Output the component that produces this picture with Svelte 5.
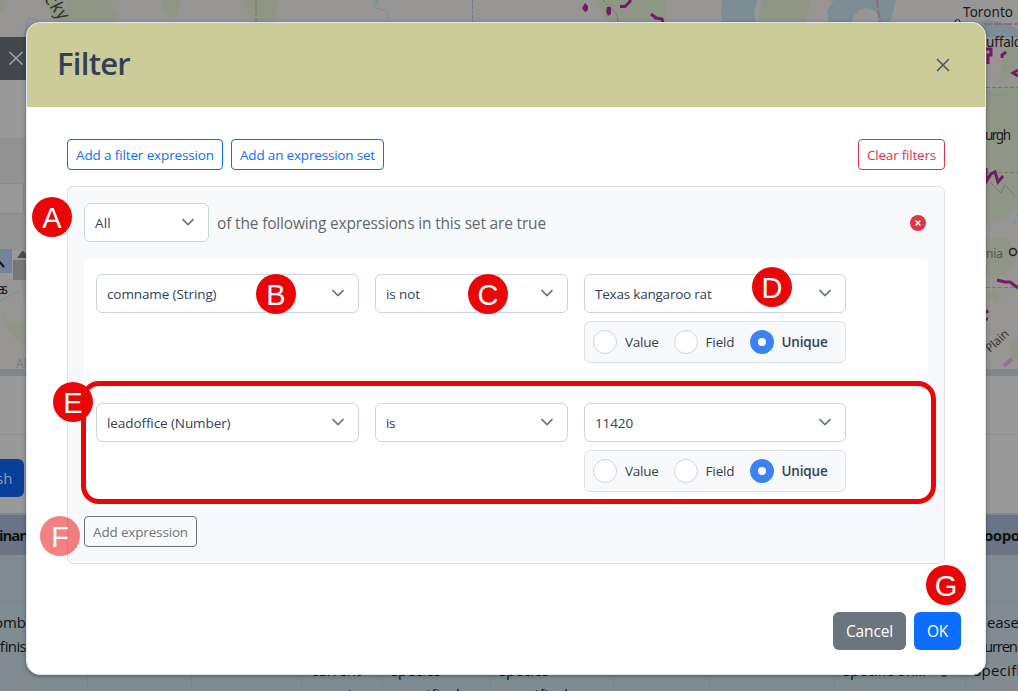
<script>
  const rules = [
    { field: ['comname (String)', 109.5], op: ['is not', 34], value: ['Texas kangaroo rat', 116.5] },
    { field: ['leadoffice (Number)', 123.5], op: ['is', 9], value: ['11420', 38] }
  ];
  const modes = [['Value', 33.5], ['Field', 29], ['Unique', 46]];
  const badges = [
    ['A', 52, 217], ['B', 276, 294], ['C', 488, 294], ['D', 772, 287],
    ['E', 73, 402], ['F', 60, 536], ['G', 946, 585]
  ];

  // Spreads a label's letters so that it takes exactly the given width.
  function fit(node, width) {
    const natural = node.getBoundingClientRect().width;
    node.style.letterSpacing = `${(width - natural) / node.textContent.length}px`;
  }
</script>

{#snippet label(text, width)}
  <span class="label" use:fit={width}>{text}</span>
{/snippet}

{#snippet select(item)}
  <div class="select">
    {@render label(item[0], item[1])}
    <svg width="14" height="14" viewBox="0 0 14 14"><path d="M1.5 4.1 7 9.6l5.5-5.5" /></svg>
  </div>
{/snippet}

<div class="screen">
  <svg class="backdrop" width="1018" height="691" viewBox="0 0 1018 691" aria-hidden="true">
    <rect width="1018" height="369" fill="#979694" />
    <g fill="#8f9685">
      <path d="M42 0h16l6 8 12-5 8 8-7 10-18 1-8-8zM66 0h48l-4 10 10 4-6 9H72l-5-9zM160 0h20l-2 12-4 8-8-6zM243 0h36l-5 23h-22zM598 0h68v23h-56l-8-10zM762 0h50l-8 23h-46zM828 0h36l-6 14h-20zM0 0h4l2 10-6 2z" />
      <path d="M986 92q14-8 32-6v120l-12 10-20 8zM986 238h22l10 22-12 14-20 4zM986 296l8-8 8 8-6 7zM1010 340h8v18h-6zM0 308l8 16 18-4v26l-10-6-8-10zM20 280l6 2v20z" />
      <path d="M1001 45l7-5 10 10v18l-10 10-10 6 4-20z" />
    </g>
    <g fill="#8a939a">
      <path d="M722 0h36l-4 11 2 12h-34l-1-12z" fill="#7c8d95" />
      <path d="M834 0h62l-6 23h-10q-2-14-13-15-12 0-16 15h-22l-2-12z" fill="#7c8d95" />
      <path d="M980 21q15-3 38 8v8h-32z" fill="#7c8d95" />
    </g>
    <path d="M378 0q-9 8 2 9t8 12M374 2q8 4 2-2M28 19h9l-2 18H24zM12 294q10-8 14 8M0 301l11-6M986 90q9 9 19 3M1018 214l-4 10" fill="none" stroke="#759199" />
    <path d="M472.500 0v22" stroke="#777b8b" stroke-dasharray="4 1" />
    <path d="M256 0v22M986 87.500h32M986 172.500h32M986 287.500h32" stroke="#777" stroke-dasharray="4 2" fill="none" />
    <path d="M603 0l6 7q9 5 9 15" stroke="#737684" fill="none" />
    <path d="M877 0l3 23M984 24h34" stroke="#896f7a" stroke-width="2" stroke-dasharray="8 2" />
    <path d="M990 182l11 11 4-8 5 5 5 7" stroke="#777" fill="none" />
    <g fill="none" stroke="#751a67" stroke-width="3">
      <path d="M620 6.500h5l5-5V0M651 14l5 4 6 1 1 4M986 49h5v6h-3v9M1006 52l-4 3v3M1018 70l-5 3 5 3M986 168v14l5-8 4-2 3 10 5-6M997 280l8 2h5l8 6M986 310l2 3M986 319h2" />
    </g>
    <path d="M585 3l3 3v4l-3 2-3-4zM607 7h4v7l-3 2-2-4z" fill="#751a67" />
    <path d="M1004 366l8-7" stroke="#96729a" stroke-width="4" />
    <g class="map-text">
      <text x="963" y="17" textLength="50">Toronto</text>
      <text x="986" y="47" textLength="36">uffalo</text>
      <text x="985" y="140" textLength="26">urgh</text>
      <text x="986" y="258" textLength="17" font-size="12" fill="#555">nia</text>
      <text x="-3" y="294" textLength="11">as</text>
      <text x="16" y="368" font-size="12" fill="#777">Al</text>
      <text transform="translate(990 353) rotate(-43)" font-size="12" textLength="27" fill="#333">Plain</text>
      <text transform="translate(44 0) rotate(52)" font-size="18" textLength="27" font-style="italic" fill="#333">cky</text>
    </g>
    <circle cx="957.500" cy="22" r="2.500" fill="none" stroke="#222" />
    <circle cx="1013" cy="252" r="3.500" fill="none" stroke="#222" stroke-width="1.500" />

    <rect y="37" width="27" height="43" fill="#42474b" />
    <path d="M9.500 52l13 12.500M22.500 52l-13 12.500" stroke="#aaa" stroke-width="1.400" />
    <rect y="80" width="27" height="199" fill="#999" />
    <path d="M0 138h27v112H0z" fill="#929292" />
    <rect x="-8" y="183.500" width="31.500" height="30" rx="3" fill="#999" stroke="#898989" />
    <rect y="249" width="12" height="24" fill="#74849a" />
    <path d="M-2 260l6 7" stroke="#111" stroke-width="2" />
    <rect x="13" y="260" width="14" height="20" fill="#777" />
    <path d="M17 258l5-7h2l4 7z" fill="#4d4d4d" />

    <rect y="369" width="1018" height="7" fill="#81878a" />
    <rect y="376" width="1018" height="138" fill="#999" />
    <path d="M0 434.500h1018" stroke="#8e8e8e" />
    <rect x="-10" y="459" width="34" height="38" rx="6" fill="#083f98" />
    <text class="page-text" x="-4" y="484" style:fill="#8f9aac">sh</text>
    <rect y="513" width="1018" height="2" fill="#818a8e" />
    <rect y="515" width="1018" height="40" fill="#6a7485" />
    <rect y="555" width="1018" height="136" fill="#818c92" />
    <path d="M0 601.500h1018M87.500 602v89M191.500 602v89M301.500 602v89M382.500 602v89M490.500 602v89M613.500 602v89M709.500 602v89M834.500 602v89M965.500 602v89" stroke="#7c858c" />
    <g class="page-text">
      <text x="-1" y="541" font-weight="700" textLength="30">inan</text>
      <text x="984" y="541" font-weight="700" textLength="36">oopo</text>
      <text x="-6" y="628" textLength="32">omb</text>
      <text x="-1" y="652" textLength="27">finis</text>
      <text x="987" y="628" textLength="32">ease</text>
      <text x="984" y="652" textLength="34">urren</text>
      <text x="974" y="676" textLength="46">specifi</text>
      <text x="311" y="676" textLength="50">current</text>
      <text x="391" y="676" textLength="50">species</text>
      <text x="499" y="676" textLength="50">species</text>
      <text x="843" y="676" textLength="83">specific on...</text>
      <text x="320" y="700" textLength="45">species</text>
      <text x="390" y="700" textLength="70">specified</text>
      <text x="498" y="700" textLength="70">specified</text>
    </g>
    <circle cx="944" cy="674" r="3" fill="#0b4fb5" />
  </svg>

  <section class="dialog">
    <header>
      <h1>{@render label('Filter', 73)}</h1>
      <svg width="14" height="14" viewBox="0 0 14 14"><path d="M1 1l12 12M13 1 1 13" /></svg>
    </header>
    <main>
      <div class="actions">
        <button class="small blue">{@render label('Add a filter expression', 138)}</button>
        <button class="small blue">{@render label('Add an expression set', 135)}</button>
        <button class="small red">{@render label('Clear filters', 69)}</button>
      </div>
      <div class="set">
        <div class="set-head">
          <div class="scope">{@render select(['All', 16])}</div>
          <p>{@render label('of the following expressions in this set are true', 329)}</p>
          <svg width="16" height="16" viewBox="0 0 16 16"><circle cx="8" cy="8" r="8" /><path d="M5.600 5.600l4.800 4.800M10.400 5.600l-4.800 4.800" /></svg>
        </div>
        {#each rules as rule}
          <div class="rule">
            {@render select(rule.field)}
            {@render select(rule.op)}
            <div class="value">
              {@render select(rule.value)}
              <div class="modes">
                {#each modes as mode, i}
                  <div class="mode" class:on={i === 2}><i></i>{@render label(mode[0], mode[1])}</div>
                {/each}
              </div>
            </div>
          </div>
        {/each}
        <button class="small gray">{@render label('Add expression', 95)}</button>
      </div>
    </main>
    <footer>
      <button class="cancel">{@render label('Cancel', 47)}</button>
      <button class="ok">{@render label('OK', 21)}</button>
    </footer>
  </section>

  <div class="highlight"></div>
  {#each badges as [letter, x, y]}
    <div class="badge" class:faded={letter === 'F'} style:left="{x - 20}px" style:top="{y - 20}px">{letter}</div>
  {/each}
</div>

<style>
  :global(body) { margin: 0; overflow: hidden; }
  .screen {
    position: relative; width: 1018px; height: 691px; overflow: hidden; box-sizing: border-box;
    padding: 22px 32px 0 26px; font-family: "Open Sans", "Noto Sans", sans-serif; font-size: 14px; color: #334155;
  }
  .screen * { box-sizing: border-box; }
  .backdrop { position: absolute; left: 0; top: 0; }
  .map-text text { font-family: "Noto Sans", sans-serif; }
  .map-text { font-size: 13.500px; fill: #1b1b1b; }
  .page-text { font-size: 15px; fill: #111; }
  .label { display: inline-block; white-space: nowrap; }
  .dialog {
    position: relative; width: 960px; height: 653px; border: 1px solid #e2e8f0; border-radius: 14px;
    background: #fff; overflow: hidden; box-shadow: 0 1px 4px rgba(0, 0, 0, .35);
    display: flex; flex-direction: column;
  }
  header {
    height: 84px; flex: none; background: #cccc99; display: flex; justify-content: space-between;
    align-items: center; padding: 0 35px 0 30px;
  }
  h1 { margin: 0 0 4px; font-size: 31px; line-height: 40px; font-weight: 600; }
  header path { stroke: #475569; stroke-width: 1.600; fill: none; }
  main { padding: 32px 40px 0; flex: 1; }
  .actions { display: flex; gap: 8px; margin-bottom: 16px; }
  .red { margin-left: auto; }
  button { font: inherit; display: flex; align-items: center; justify-content: center; padding: 0; border: 0; }
  .small { height: 31px; padding: 0 8px; border: 1px solid; border-radius: 4px; background: transparent; font-size: 13.500px; }
  .blue { color: #0d6efd; }
  .red { color: #dc3545; }
  .gray { color: #6c757d; }
  .set {
    border: 1px solid #dee2e6; border-radius: 6px; background: #f8f9fb; padding: 16px;
    display: flex; flex-direction: column; gap: 8px; align-items: flex-start;
  }
  .set-head { display: flex; align-items: center; width: 100%; margin-bottom: 8px; padding-right: 2px; }
  .scope { width: 125px; }
  .set-head p { margin: 0 auto 0 8px; font-size: 15.500px; color: #64676b; }
  .set-head circle { fill: #dc3545; }
  .set-head path { stroke: #fff; stroke-width: 1.400; }
  .select {
    height: 39px; width: 100%; border: 1px solid #cbd5e1; border-radius: 6px; background: #fff;
    display: flex; align-items: center; justify-content: space-between; padding: 1px 13px 0 10px; font-size: 13.500px;
  }
  .select svg { margin-bottom: 2px; }
  .select path { fill: none; stroke: #64748b; stroke-width: 1.600; }
  .rule {
    width: 100%; height: 121px; padding: 16px 12px; background: #fff; border-radius: 6px;
    display: grid; grid-template-columns: 263px 193px 262px; column-gap: 16px; align-items: start;
  }
  .value { display: flex; flex-direction: column; gap: 8px; }
  .modes {
    height: 42px; border: 1px solid #dee2e6; border-radius: 6px; background: #f8f9fb; padding: 0 8px;
    display: flex; align-items: center; gap: 15px; font-size: 13.500px;
  }
  .mode { display: flex; align-items: center; gap: 8px; }
  .mode i { width: 24px; height: 24px; border: 1px solid #cbd5e1; border-radius: 50%; background: #fff; }
  .on { font-weight: 600; }
  .mode.on i { border: 8px solid #3b82f6; }
  footer { display: flex; justify-content: flex-end; gap: 8px; padding: 0 24px 24px; }
  footer button { height: 38px; color: #fff; border-radius: 6px; font-size: 15.500px; }
  .cancel { width: 73px; background: #6c757d; }
  .ok { width: 47px; background: #0d6efd; }
  .highlight { position: absolute; left: 81px; top: 381px; width: 855px; height: 123px; border: 5px solid #ea0606; border-radius: 18px; }
  .badge {
    position: absolute; width: 40px; height: 40px; border-radius: 50%; background: #ea0606; color: #fff;
    font: 29px/42px "Liberation Sans", Arial, sans-serif; text-align: center;
  }
  .faded { opacity: .5; }
</style>
